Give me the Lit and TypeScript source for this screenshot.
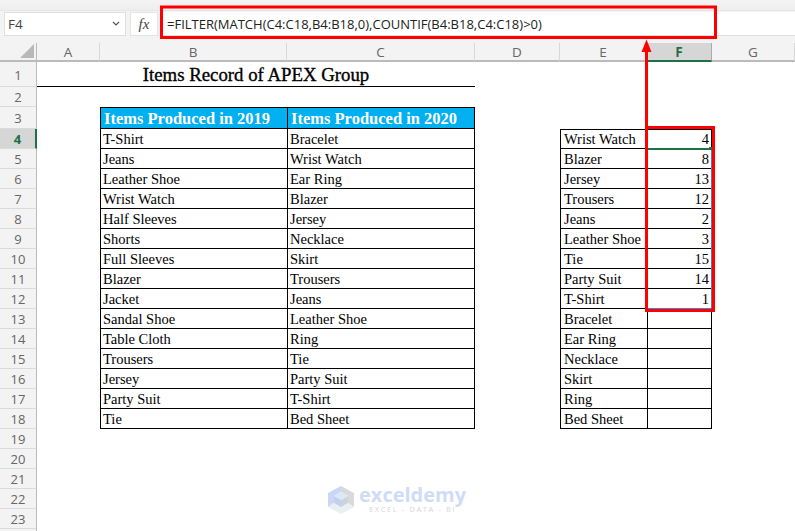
import { LitElement, html, css } from "lit";
import { customElement } from "lit/decorators.js";

const col1 = ["T-Shirt","Jeans","Leather Shoe","Wrist Watch","Half Sleeves","Shorts","Full Sleeves","Blazer","Jacket","Sandal Shoe","Table Cloth","Trousers","Jersey","Party Suit","Tie"];
const col2 = ["Bracelet","Wrist Watch","Ear Ring","Blazer","Jersey","Necklace","Skirt","Trousers","Jeans","Leather Shoe","Ring","Tie","Party Suit","T-Shirt","Bed Sheet"];
const col3 = ["Wrist Watch","Blazer","Jersey","Trousers","Jeans","Leather Shoe","Tie","Party Suit","T-Shirt","Bracelet","Ear Ring","Necklace","Skirt","Ring","Bed Sheet"];
const nums = ["4","8","13","12","2","3","15","14","1","","","","","",""];
const letters = ["A","B","C","D","E","F","G"];

@customElement("app-root")
export class AppRoot extends LitElement {
  static styles = css`
    :host { display: block; width: 795px; height: 531px; overflow: hidden; position: relative; background: #fff; font-family: "Liberation Serif", serif; color: #000; }
    .top { height: 43px; background: #f3f3f3; display: flex; flex-direction: column; box-sizing: border-box; }
    .strip { height: 10px; background: linear-gradient(#f4f4f4, #eeeeee); border-bottom: 1px solid #e6e6e6; }
    .fbar { display: flex; align-items: flex-start; padding: 1px 0 0 4px; gap: 4px; }
    .name { width: 122px; height: 24px; box-sizing: border-box; background: #fff; border: 1px solid #dfdfdf; display: flex; align-items: center; justify-content: space-between; padding: 0 5px 0 3px; font: 13.5px "Open Sans", sans-serif; color: #444; }
    .fx { width: 28px; height: 24px; box-sizing: border-box; background: #fff; border: 1px solid #e4e4e4; display: flex; align-items: center; justify-content: center; font: italic 15px "Liberation Serif", serif; color: #444; }
    .formula { flex: 1; height: 24px; margin-left: 1px; background: #fff; border-bottom: 1px solid #e0e0e0; box-sizing: border-box; display: flex; align-items: center; padding-left: 4px; font: 13px "Open Sans", sans-serif; color: #222; white-space: nowrap; }
    .sheet { display: grid; grid-template-columns: 37px 63px 187px 188px 85px 87px 65px 83px; grid-template-rows: 19px 25px 20px 22px repeat(21, 20px); }
    .cell { box-sizing: border-box; font-size: 14.5px; line-height: 19px; padding: 1px 2px 0; white-space: nowrap; overflow: hidden; display: flex; align-items: center; min-width: 0; }
    .corner { background: #f3f3f3; border-right: 1px solid #bbb; border-bottom: 2px solid #bbb; position: relative; }
    .tri { position: absolute; right: 2px; bottom: 2px; width: 0; height: 0; border-left: 14px solid transparent; border-bottom: 14px solid #b9b9b9; }
    .ch { background: #f3f3f3; border-right: 1px solid #d8d8d8; border-bottom: 2px solid #bbb; justify-content: center; font: 13.5px "Open Sans", sans-serif; color: #666; padding: 0; }
    .ch.sel { background: #d6d6d6; color: #1f7145; font-weight: 700; border-bottom-color: #1f7145; border-right-color: #aaa; }
    .rh { background: #f3f3f3; border-right: 1px solid #bbb; border-bottom: 1px solid #dadada; justify-content: center; font: 13px "Open Sans", sans-serif; color: #666; padding: 1px 0 0; }
    .rh.sel { background: #d6d6d6; color: #1f7145; font-weight: 700; border-right: 2px solid #1f7145; }
    .title { grid-column: 2 / span 3; border-bottom: 1px solid #000; justify-content: center; font-size: 18.8px; padding-top: 0; -webkit-text-stroke: 0.35px #000; }
    .t { border-left: 1px solid #000; border-bottom: 1px solid #000; }
    .t.r { border-right: 1px solid #000; }
    .t.up { border-top: 1px solid #000; }
    .t.e { padding-left: 3px; }
    .hd { background: #00b0f0; color: #fff; font-size: 16.5px; font-weight: 700; padding-left: 3px; padding-top: 0; }
    .num { justify-content: flex-end; }
    .ov { position: absolute; left: 0; top: 0; pointer-events: none; }
    .wm { position: absolute; left: 326px; top: 485px; display: flex; align-items: flex-start; gap: 3px; }
    .wmt { display: flex; flex-direction: column; }
    .wm1 { font: 700 20px "Open Sans", sans-serif; color: #cfdcf8; line-height: 20px; }
    .wm2 { font: 7.5px "Open Sans", sans-serif; color: #d4d8dd; letter-spacing: 1.6px; line-height: 9px; padding-left: 10px; }
  `;

  render() {
    return html`
      <div class="top">
        <div class="strip"></div>
        <div class="fbar">
          <div class="name"><span>F4</span>
            <svg width="8" height="6" viewBox="0 0 8 6"><path d="M1 1l3 3 3-3" fill="none" stroke="#555" stroke-width="1.2"/></svg>
          </div>
          <div class="fx">fx</div>
          <div class="formula">=FILTER(MATCH(C4:C18,B4:B18,0),COUNTIF(B4:B18,C4:C18)&gt;0)</div>
        </div>
      </div>
      <div class="sheet">
        <div class="cell corner"><div class="tri"></div></div>
        ${letters.map((l) => html`<div class="cell ch ${l === "F" ? "sel" : ""}">${l}</div>`)}
        ${Array.from({ length: 24 }, (_, i) => this.row(i + 1))}
      </div>
      <svg class="ov" width="795" height="531" viewBox="0 0 795 531">
        <rect x="648" y="148" width="63" height="2" fill="#1f7145"/>
        <rect x="709" y="147" width="3" height="3" fill="#1f7145"/>
        <path d="M648 308.5H711.5V150" fill="none" stroke="#4a7fc1" stroke-width="1"/>
        <rect x="161.5" y="7" width="554" height="30.5" fill="none" stroke="#f00" stroke-width="3"/>
        <rect x="646.5" y="127.5" width="67" height="183" fill="none" stroke="#f00" stroke-width="3"/>
        <rect x="645" y="50" width="3" height="78" fill="#f00"/>
        <path d="M646.5 39.5L651.5 52H641.5Z" fill="#f00"/>
      </svg>
      <div class="wm">
        <svg width="30" height="30" viewBox="0 0 30 30">
          <path d="M15 1L28 8V22L22 18V11L15 7Z" fill="#d9d9d9"/>
          <path d="M15 1L2 8V22L8 18V11L15 7Z" fill="#c9d8f8"/>
          <path d="M2 22L15 29L28 22L22 18L15 22L8 18Z" fill="#e8f0f4"/>
          <path d="M15 7L22 11L15 15L8 11Z" fill="#dfe7f7"/>
          <path d="M8 11L15 15V22L8 18Z" fill="#c2d0ee"/>
          <path d="M22 11L15 15V22L22 18Z" fill="#cdd3da"/>
        </svg>
        <div class="wmt">
          <span class="wm1">exceldemy</span>
          <span class="wm2">EXCEL - DATA - BI</span>
        </div>
      </div>
    `;
  }

  row(n: number) {
    const rh = html`<div class="cell rh ${n === 4 ? "sel" : ""}">${n < 24 ? n : ""}</div>`;
    const blank = html`<div class="cell"></div>`;
    if (n === 1) return html`${rh}<div class="cell title">Items Record of APEX Group</div>${blank}${blank}${blank}${blank}`;
    if (n === 3) return html`${rh}${blank}
      <div class="cell t up hd">Items Produced in 2019</div>
      <div class="cell t up r hd">Items Produced in 2020</div>
      ${blank}${blank}${blank}${blank}`;
    if (n >= 4 && n <= 18) {
      const i = n - 4;
      return html`${rh}${blank}
        <div class="cell t">${col1[i]}</div>
        <div class="cell t r">${col2[i]}</div>
        ${blank}
        <div class="cell t e ${n === 4 ? "up" : ""}">${col3[i]}</div>
        <div class="cell t r num ${n === 4 ? "up" : ""}">${nums[i]}</div>
        ${blank}`;
    }
    return html`${rh}${blank}${blank}${blank}${blank}${blank}${blank}${blank}`;
  }
}
